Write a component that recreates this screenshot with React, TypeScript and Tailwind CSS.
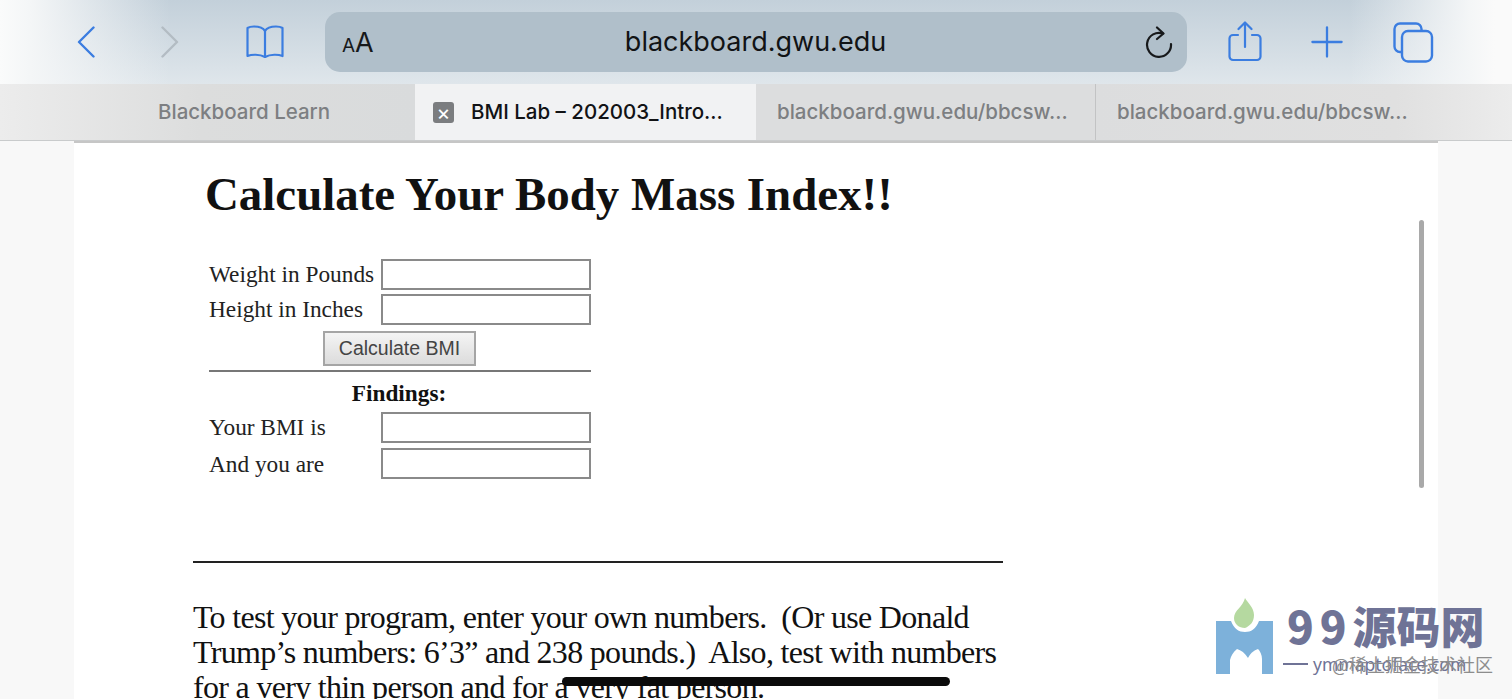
import { Plus } from 'lucide-react';

const tabText = 'text-[20.5px] font-medium text-[#7d7f82] whitespace-nowrap';
const chrome = { fontFamily: 'Inter' };

function BackIcon({ color }: { color: string }) {
  return (
    <svg width="18" height="32" viewBox="0 0 18 32" fill="none" stroke={color} strokeWidth="2.400" strokeLinecap="round" strokeLinejoin="round">
      <path d="M16.500 1.500L2 16l14.500 14.500" />
    </svg>
  );
}

function ForwardIcon({ color }: { color: string }) {
  return (
    <svg width="18" height="32" viewBox="0 0 18 32" fill="none" stroke={color} strokeWidth="2.400" strokeLinecap="round" strokeLinejoin="round">
      <path d="M1.500 1.500L16 16 1.500 30.500" />
    </svg>
  );
}

function BookIcon() {
  return (
    <svg width="40" height="34" viewBox="0 0 40 34" fill="none" stroke="#3b7de0" strokeWidth="2.2" strokeLinejoin="round" strokeLinecap="round">
      <path d="M20 6C18 2.5 14 1.5 9 1.5 6.5 1.5 4 2 2.5 3v28c4-1.6 12-2 17.500 1 5.500-3 13.500-2.600 17.500-1V3c-1.500-1-4-1.500-6.500-1.500-5 0-9 1-11 4.500z" />
      <path d="M20 6v26" />
    </svg>
  );
}

function ReloadIcon() {
  return (
    <svg width="28" height="32" viewBox="0 0 28 32" fill="none" stroke="#17191b" strokeWidth="2.2" strokeLinecap="round" strokeLinejoin="round">
      <path d="M18 7.500A12 12 0 1 0 26 18" />
      <path d="M12 1.500l6.500 6-6.500 5.500" />
    </svg>
  );
}

function ShareIcon() {
  return (
    <svg width="34" height="41" viewBox="0 0 34 41" fill="none" stroke="#3b7de0" strokeWidth="2.2" strokeLinecap="round" strokeLinejoin="round">
      <path d="M10 14H5a3.500 3.500 0 0 0-3.500 3.500v18A3.500 3.500 0 0 0 5 39h24a3.500 3.500 0 0 0 3.500-3.500v-18A3.500 3.500 0 0 0 29 14h-5" />
      <path d="M17 26V2M10.500 8L17 1.500 23.500 8" />
    </svg>
  );
}

function TabsIcon() {
  return (
    <svg width="41" height="41" viewBox="0 0 41 41" fill="none" stroke="#3b7de0" strokeWidth="2.4" strokeLinejoin="round">
      <rect x="9" y="9" width="30" height="30.500" rx="6" />
      <path d="M9 30H7a5.500 5.500 0 0 1-5.500-5.500V7A5.500 5.500 0 0 1 7 1.500h16A5.500 5.500 0 0 1 28.500 7v2" />
    </svg>
  );
}

function LogoMark() {
  return (
    <svg width="60" height="78" viewBox="0 0 60 78">
      <path d="M30 1c3 5 9 10 9 17 0 7-4 11-9 13-6 0-11-4-11-10 0-8 9-11 11-20z" fill="#b5d9a0" />
      <path d="M1 24h15c3 8 8 11 14 11s11-3 14-11h14v53H47V62c0-4-2-8-4-10-3 1-7 3-10 9-3-5-7-8-11-9-4 3-6 7-7 11v14H1z" fill="#7db1da" />
    </svg>
  );
}

function Field() {
  return <input className="w-[210px] h-[31px] border-2 border-[#8a8a8a] bg-white" />;
}

export default function App() {
  return (
    <div className="relative w-[1512px] h-[699px] overflow-hidden flex flex-col bg-[#f8f8f8]">
      {/* Toolbar */}
      <div
        className="h-[84px] shrink-0 flex items-center pl-[77px] bg-[linear-gradient(90deg,#fafbfb_0px,#f4f6f7_30px,#f4f6f700_170px,#f4f6f700_1350px,#f4f6f7_1470px,#fafafa_1495px),linear-gradient(180deg,#c3d0da,#dfe6eb)]"
        style={chrome}
      >
        <BackIcon color="#3b7de0" />
        <div className="ml-[66px]"><ForwardIcon color="#b3bcc3" /></div>
        <div className="ml-[66px]"><BookIcon /></div>
        <div className="ml-[40px] w-[862px] h-[60px] rounded-[15px] bg-[#b0bfca] flex items-center pl-[17px] pr-[14px]">
          <span className="w-[100px] text-[#17191b] leading-none"><span className="text-[19px]">A</span><span className="text-[27px]">A</span></span>
          <span className="flex-1 mt-[1px] text-center text-[27px] text-[#111315] pr-[76px]">blackboard.gwu.edu</span>
          <ReloadIcon />
        </div>
        <div className="ml-[41px] mb-[2px]"><ShareIcon /></div>
        <Plus size={50} strokeWidth={1.1} className="ml-[40px] text-[#3b7de0]" />
        <div className="ml-[41px]"><TabsIcon /></div>
      </div>

      {/* Tab strip */}
      <div className="h-[57px] shrink-0 flex border-b border-[#c9cbcc]" style={chrome}>
        <div className="w-[415px] flex items-center pl-[158px] bg-[linear-gradient(90deg,#ececec_0px,#dcdddd_200px,#d9dbdc_415px)]">
          <span className={tabText}>Blackboard Learn</span>
        </div>
        <div className="w-[341px] flex items-center pl-[18px] bg-[#f1f2f3]">
          <span className="w-[21px] h-[21px] rounded-[3px] bg-[#7b7d7f] text-white flex items-center justify-center text-[21px] leading-none">×</span>
          <span className="ml-[17px] text-[20.5px] font-medium text-[#111315] whitespace-nowrap">BMI Lab – 202003_Intro...</span>
        </div>
        <div className="w-[340px] flex items-center pl-[21px] bg-[#dcddde] border-r border-[#c2c3c4]">
          <span className={tabText}>blackboard.gwu.edu/bbcsw...</span>
        </div>
        <div className="flex-1 flex items-center pl-[21px] bg-[linear-gradient(90deg,#dcddde,#e0e0e0_300px,#ececec)]">
          <span className={tabText}>blackboard.gwu.edu/bbcsw...</span>
        </div>
      </div>

      {/* Page */}
      <div className="flex-1 mx-[74px] bg-white border-t-2 border-[#c6c6c6] overflow-hidden pl-[119px] text-black" style={{ fontFamily: '"Liberation Serif", serif' }}>
        <h1 className="ml-[12px] mt-[25px] text-[46.900px] leading-[52px] font-bold text-[#111] whitespace-nowrap">Calculate Your Body Mass Index!!</h1>

        <div className="ml-[16px] mt-[39px] w-[382px] text-[23.300px] text-[#222]">
          <div className="flex items-center justify-between h-[31px]">
            <span>Weight in Pounds</span>
            <Field />
          </div>
          <div className="flex items-center justify-between h-[31px] mt-[4px]">
            <span>Height in Inches</span>
            <Field />
          </div>
          <div className="flex justify-center mt-[6px] pr-[1px]">
            <button className="w-[153px] h-[35px] border-2 border-[#a5a5a5] bg-[linear-gradient(#f4f4f4,#dcdcdc)] text-[19.500px] text-[#444]" style={{ fontFamily: '"Liberation Sans", sans-serif' }}>
              Calculate BMI
            </button>
          </div>
          <div className="h-[2px] mt-[4px] bg-[#777]" />
          <div className="text-center font-bold mt-[7px] leading-[28px] text-[#111] pr-[2px]">Findings:</div>
          <div className="flex items-center justify-between h-[31px] mt-[5px]">
            <span>Your BMI is</span>
            <Field />
          </div>
          <div className="flex items-center justify-between h-[31px] mt-[5px]">
            <span className="mt-[1px]">And you are</span>
            <Field />
          </div>
        </div>

        <div className="mt-[82px] w-[810px] h-[2px] bg-[#222]" />

        <p className="mt-[37px] w-[830px] text-[32px] leading-[35px] tracking-[-0.69px] text-[#111] whitespace-pre">
          {'To test your program, enter your own numbers.  (Or use Donald\nTrump’s numbers: 6’3” and 238 pounds.)  Also, test with numbers\nfor a very thin person and for a very fat person.'}
        </p>
      </div>

      {/* Scrollbar */}
      <div className="absolute left-[1419px] top-[220px] w-[5px] h-[268px] rounded-full bg-[#a9a9a9]" />

      {/* Home indicator */}
      <div className="absolute left-[562px] top-[677px] w-[388px] h-[9px] rounded-full bg-[#0b0b0b]" />

      {/* Watermark */}
      <div className="absolute left-[1215px] top-[597px] flex">
        <LogoMark />
        <div className="ml-[8px] mt-[-2px]">
          <div className="ml-[4px] text-[44px] leading-[60px] font-black text-[#6f7396] whitespace-nowrap" style={{ fontFamily: '"Noto Sans CJK SC", sans-serif' }}>
            <span className="tracking-[6px]">99</span>源码网
          </div>
          <div className="relative mt-[-1px] flex items-center text-[17.500px] leading-[20px] text-[#6f7396] whitespace-nowrap" style={{ fontFamily: '"Noto Sans", sans-serif' }}>
            <span className="w-[25px] h-[2px] mr-[5px] bg-[#6f7396]" />
            <span>ymmaptoface.com</span>
            <span className="absolute left-[49px] top-[0px] text-[18px] text-[#8d8d8d]" style={{ fontFamily: '"Noto Sans CJK SC", sans-serif' }}>@稀土掘金技术社区</span>
          </div>
        </div>
      </div>
    </div>
  );
}
